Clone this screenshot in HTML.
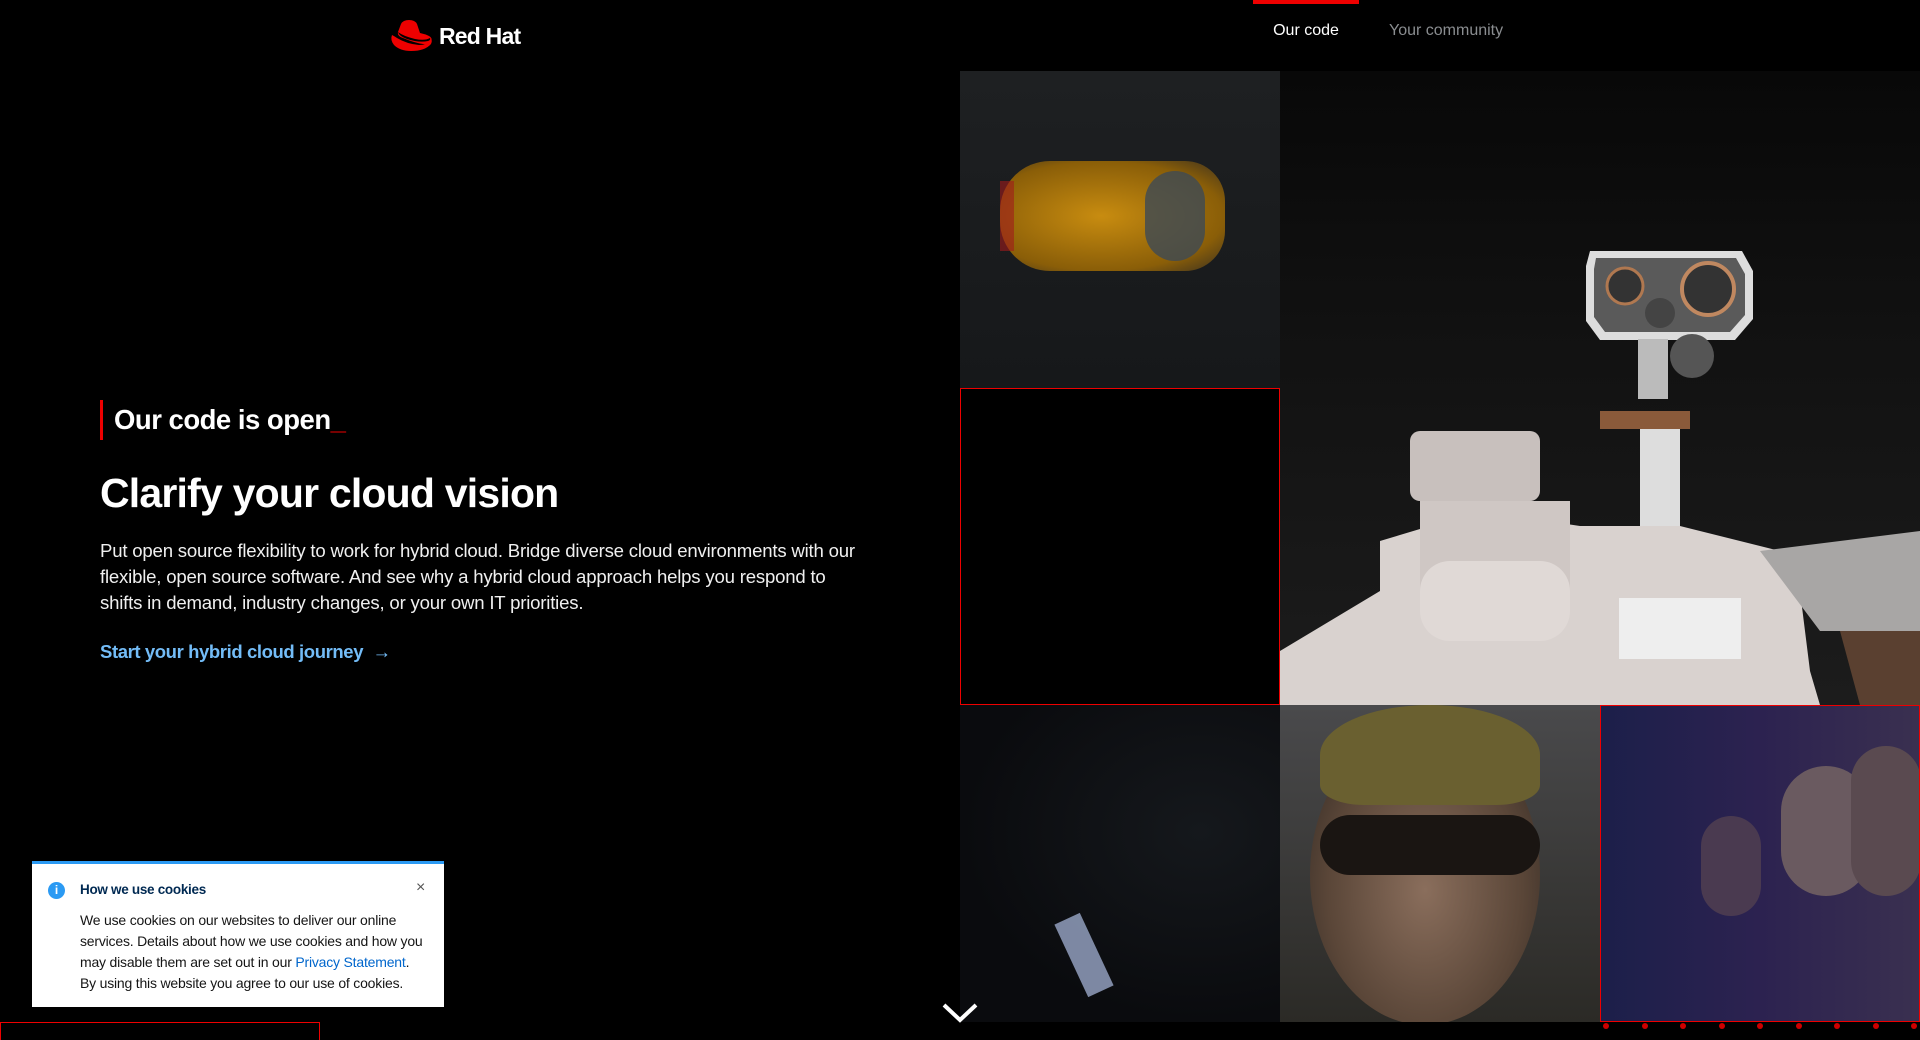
<!DOCTYPE html>
<html style="overflow:hidden;height:1040px"><head><meta charset="utf-8"><style>
*{margin:0;padding:0;box-sizing:border-box}
body{width:1920px;height:1040px;background:#000;overflow:hidden;position:relative;font-family:"Liberation Sans",sans-serif;color:#fff}
.abs{position:absolute}
.cell{position:absolute;width:320px;height:317px;overflow:hidden}
</style></head><body>
<!-- logo -->
<div class="abs" style="left:389px;top:18px;width:140px;height:36px">
<svg width="48" height="36" viewBox="0 0 48 36" style="position:absolute;left:0;top:0">
<path d="M12 6 Q14 2 20 2 Q26 2 28 6 L31 15 Q36 16 40 18 Q44 20 42 24 Q40 27 34 26 Q26 25 14 20 Q8 18 9 14 Z" fill="#e00"/>
<path d="M3 17 Q1 22 5 27 Q11 33 22 33 Q36 33 42 26 Q44 22 41 20 Q40 27 30 27 Q18 26 8 20 Q5 18 3 17Z" fill="#e00"/>
<path d="M9 14 Q10 18 18 21 Q30 25 39 23 Q42 22 41 20 Q36 23 26 21 Q14 18 9 14Z" fill="#000"/>
</svg>
<div class="abs" style="left:50px;top:5px;font-size:23px;font-weight:bold;letter-spacing:-0.8px;color:#fff">Red Hat</div>
</div>
<!-- nav -->
<div class="abs" style="left:1253px;top:0;width:106px;height:4px;background:#e00"></div>
<div class="abs" style="left:1253px;top:22px;width:106px;text-align:center;font-size:16px;color:#fff">Our code</div>
<div class="abs" style="left:1389px;top:22px;font-size:16px;color:#8a8d90">Your community</div>
<!-- text -->
<div class="abs" style="left:100px;top:400px;width:3px;height:40px;background:#e00"></div>
<div class="abs" style="left:114px;top:404px;font-size:27.5px;font-weight:bold;letter-spacing:-0.5px">Our code is open<span style="color:#e00">_</span></div>
<div class="abs" style="left:100px;top:470px;font-size:41px;font-weight:bold;letter-spacing:-0.8px">Clarify your cloud vision</div>
<div class="abs" style="left:100px;top:538px;width:770px;font-size:18.6px;line-height:26px;color:#f0f0f0;letter-spacing:-0.2px">Put open source flexibility to work for hybrid cloud. Bridge diverse cloud environments with our flexible, open source software. And see why a hybrid cloud approach helps you respond to shifts in demand, industry changes, or your own IT priorities.</div>
<div class="abs" style="left:100px;top:641px;font-size:18.5px;font-weight:bold;color:#73bcf7;letter-spacing:-0.4px">Start your hybrid cloud journey &nbsp;→</div>
<!-- grid -->
<div class="cell" style="left:960px;top:71px;background:linear-gradient(180deg,#1e2022,#16181a)">
<div class="abs" style="left:40px;top:90px;width:225px;height:110px;border-radius:50px 40px 40px 50px;background:radial-gradient(ellipse at 45% 50%,#c88c10,#8a5e08 70%,#3a3020)"></div>
<div class="abs" style="left:185px;top:100px;width:60px;height:90px;border-radius:30px;background:#3d4a55;opacity:.8"></div>
<div class="abs" style="left:40px;top:110px;width:14px;height:70px;background:#a01a1a;opacity:.6"></div>
</div>
<div class="cell" style="left:960px;top:388px;background:#000;border:1px solid #e00"></div>
<div class="abs" style="left:1280px;top:71px;width:640px;height:634px;background:linear-gradient(180deg,#080808 0%,#111 40%,#1c1c1c 100%);overflow:hidden">
<svg width="640" height="634" viewBox="0 0 640 634">
<polygon points="310,180 462,180 473,200 473,248 455,269 320,269 306,250 306,195" fill="#ddd"/>
<polygon points="316,187 456,187 465,203 465,244 450,261 325,261 314,246 314,198" fill="#5a5a5a"/>
<circle cx="345" cy="215" r="18" fill="#333" stroke="#b07850" stroke-width="3"/>
<circle cx="428" cy="218" r="26" fill="#333" stroke="#c08860" stroke-width="4"/>
<circle cx="380" cy="242" r="15" fill="#444"/>
<rect x="358" y="268" width="30" height="60" fill="#bbb"/>
<circle cx="412" cy="285" r="22" fill="#555"/>
<rect x="320" y="340" width="90" height="18" fill="#8a5a3a"/>
<rect x="360" y="358" width="40" height="120" fill="#ddd"/>
<polygon points="0,580 100,520 100,470 200,440 300,455 400,455 500,480 520,520 530,600 540,634 0,634" fill="#d9d2cf"/>
<rect x="130" y="360" width="130" height="70" rx="10" fill="#c8c0bd"/>
<rect x="140" y="430" width="150" height="90" fill="#cfc7c4"/>
<rect x="140" y="490" width="150" height="80" rx="30" fill="#e0d9d6"/>
<rect x="339" y="527" width="122" height="61" fill="#eee"/>
<polygon points="480,480 640,460 640,560 540,560" fill="#a8a6a5"/>
<polygon points="560,560 640,560 640,634 580,634" fill="#5a4030"/>
</svg>
</div>
<div class="cell" style="left:960px;top:705px;background:radial-gradient(ellipse at 75% 40%,#15181c,#0a0b0e 70%)">
<div class="abs" style="left:110px;top:210px;width:28px;height:80px;background:#9aa8c8;transform:rotate(-25deg);opacity:.8"></div>
</div>
<div class="cell" style="left:1280px;top:705px;background:linear-gradient(180deg,#4a4a4c 0%,#2b2a26 100%)">
<div class="abs" style="left:30px;top:20px;width:230px;height:300px;border-radius:50%;background:radial-gradient(ellipse at 50% 55%,#8a6e5c,#5a4638 60%,#2a2420)"></div>
<div class="abs" style="left:40px;top:0px;width:220px;height:100px;border-radius:50% 50% 20% 20%;background:#6a6030"></div>
<div class="abs" style="left:40px;top:110px;width:220px;height:60px;border-radius:30px;background:#1a1512"></div>
</div>
<div class="cell" style="left:1600px;top:705px;background:linear-gradient(90deg,#1c1f4a 0%,#2c2250 50%,#3a3050 100%);border:1px solid #e00">
<div class="abs" style="left:180px;top:60px;width:90px;height:130px;border-radius:45px;background:#6a5a60"></div>
<div class="abs" style="left:100px;top:110px;width:60px;height:100px;border-radius:30px;background:#4a3a50"></div>
<div class="abs" style="left:250px;top:40px;width:70px;height:150px;border-radius:35px;background:#5a4a50"></div>
</div>
<!-- dots -->
<div class="abs" style="left:1600px;top:1023px;width:320px;height:6px;display:flex;justify-content:space-between;padding:0 3px">
<i style="width:6px;height:6px;border-radius:3px;background:#c00"></i><i style="width:6px;height:6px;border-radius:3px;background:#c00"></i><i style="width:6px;height:6px;border-radius:3px;background:#c00"></i><i style="width:6px;height:6px;border-radius:3px;background:#c00"></i><i style="width:6px;height:6px;border-radius:3px;background:#c00"></i><i style="width:6px;height:6px;border-radius:3px;background:#c00"></i><i style="width:6px;height:6px;border-radius:3px;background:#c00"></i><i style="width:6px;height:6px;border-radius:3px;background:#c00"></i><i style="width:6px;height:6px;border-radius:3px;background:#c00"></i>
</div>
<!-- chevron -->
<svg class="abs" style="left:940px;top:1000px" width="40" height="26" viewBox="0 0 40 26"><path d="M4 5 L20 20 L36 5" stroke="#fff" stroke-width="4" fill="none"/></svg>
<!-- cookie -->
<div class="abs" style="left:32px;top:861px;width:412px;height:146px;background:#fff;border-top:3px solid #2b9af3;color:#151515">
<div class="abs" style="left:16px;top:18px;width:17px;height:17px;border-radius:50%;background:#2b9af3;color:#fff;font-size:12px;font-weight:bold;text-align:center;line-height:17px">i</div>
<div class="abs" style="left:48px;top:18px;font-size:13.5px;font-weight:bold;color:#002952;letter-spacing:-0.3px">How we use cookies</div>
<div class="abs" style="left:384px;top:15px;font-size:16px;color:#555">×</div>
<div class="abs" style="left:48px;top:46px;width:346px;font-size:14px;line-height:21px;letter-spacing:-0.2px">We use cookies on our websites to deliver our online services. Details about how we use cookies and how you may disable them are set out in our <span style="color:#06c">Privacy Statement</span>. By using this website you agree to our use of cookies.</div>
</div>
<div class="abs" style="left:0;top:1022px;width:320px;height:18px;border:1px solid #e00;border-bottom:none"></div>
</body></html>
